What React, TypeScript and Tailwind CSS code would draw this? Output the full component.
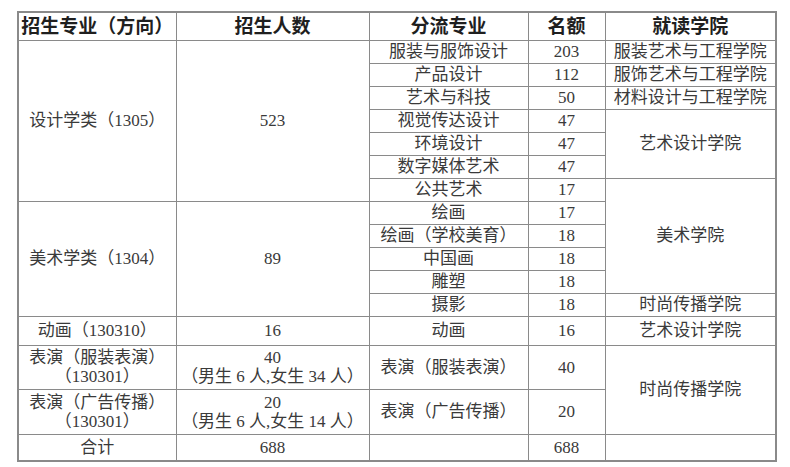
const cell = "border border-[#8a8a8a] text-center align-middle px-0 pt-[2px] pb-0 leading-[1.1] whitespace-nowrap"

const r = "h-[23px]"

export default function App() {
  return (
    <div className="w-[790px] h-[467px] bg-white pt-[11px] pl-[17px] text-[#3a3a3a] font-['Liberation_Serif','Noto_Sans_CJK_SC',serif] text-[17px]">
      <table className="border-collapse table-fixed w-[758px] border-2 border-[#8a8a8a]">
        <colgroup>
          <col className="w-[158px]" />
          <col className="w-[193px]" />
          <col className="w-[159px]" />
          <col className="w-[77px]" />
          <col className="w-[171px]" />
        </colgroup>
        <tbody>
          <tr className="h-[28px] text-[19px] font-bold text-[#1f1f1f]">
            <td className={cell}>招生专业（方向）</td>
            <td className={cell}>招生人数</td>
            <td className={cell}>分流专业</td>
            <td className={cell}>名额</td>
            <td className={cell}>就读学院</td>
          </tr>
          <tr className={r}>
            <td className={cell} rowSpan={7}>设计学类（1305）</td>
            <td className={cell} rowSpan={7}>523</td>
            <td className={cell}>服装与服饰设计</td>
            <td className={cell}>203</td>
            <td className={cell}>服装艺术与工程学院</td>
          </tr>
          <tr className={r}>
            <td className={cell}>产品设计</td>
            <td className={cell}>112</td>
            <td className={cell}>服饰艺术与工程学院</td>
          </tr>
          <tr className={r}>
            <td className={cell}>艺术与科技</td>
            <td className={cell}>50</td>
            <td className={cell}>材料设计与工程学院</td>
          </tr>
          <tr className={r}>
            <td className={cell}>视觉传达设计</td>
            <td className={cell}>47</td>
            <td className={cell} rowSpan={3}>艺术设计学院</td>
          </tr>
          <tr className={r}>
            <td className={cell}>环境设计</td>
            <td className={cell}>47</td>
          </tr>
          <tr className={r}>
            <td className={cell}>数字媒体艺术</td>
            <td className={cell}>47</td>
          </tr>
          <tr className={r}>
            <td className={cell}>公共艺术</td>
            <td className={cell}>17</td>
            <td className={cell} rowSpan={5}>美术学院</td>
          </tr>
          <tr className={r}>
            <td className={cell} rowSpan={5}>美术学类（1304）</td>
            <td className={cell} rowSpan={5}>89</td>
            <td className={cell}>绘画</td>
            <td className={cell}>17</td>
          </tr>
          <tr className={r}>
            <td className={cell}>绘画（学校美育）</td>
            <td className={cell}>18</td>
          </tr>
          <tr className={r}>
            <td className={cell}>中国画</td>
            <td className={cell}>18</td>
          </tr>
          <tr className={r}>
            <td className={cell}>雕塑</td>
            <td className={cell}>18</td>
          </tr>
          <tr className={r}>
            <td className={cell}>摄影</td>
            <td className={cell}>18</td>
            <td className={cell}>时尚传播学院</td>
          </tr>
          <tr className="h-[29px]">
            <td className={cell}>动画（130310）</td>
            <td className={cell}>16</td>
            <td className={cell}>动画</td>
            <td className={cell}>16</td>
            <td className={cell}>艺术设计学院</td>
          </tr>
          <tr className="h-[44px]">
            <td className={cell}>
              表演（服装表演）
              <br />
              （130301）
            </td>
            <td className={cell}>
              40
              <br />
              （男生 6 人,女生 34 人）
            </td>
            <td className={cell}>表演（服装表演）</td>
            <td className={cell}>40</td>
            <td className={cell} rowSpan={2}>时尚传播学院</td>
          </tr>
          <tr className="h-[45px]">
            <td className={cell}>
              表演（广告传播）
              <br />
              （130301）
            </td>
            <td className={cell}>
              20
              <br />
              （男生 6 人,女生 14 人）
            </td>
            <td className={cell}>表演（广告传播）</td>
            <td className={cell}>20</td>
          </tr>
          <tr className="h-[27px]">
            <td className={cell}>合计</td>
            <td className={cell}>688</td>
            <td className={cell}></td>
            <td className={cell}>688</td>
            <td className={cell}></td>
          </tr>
        </tbody>
      </table>
    </div>
  )
}
